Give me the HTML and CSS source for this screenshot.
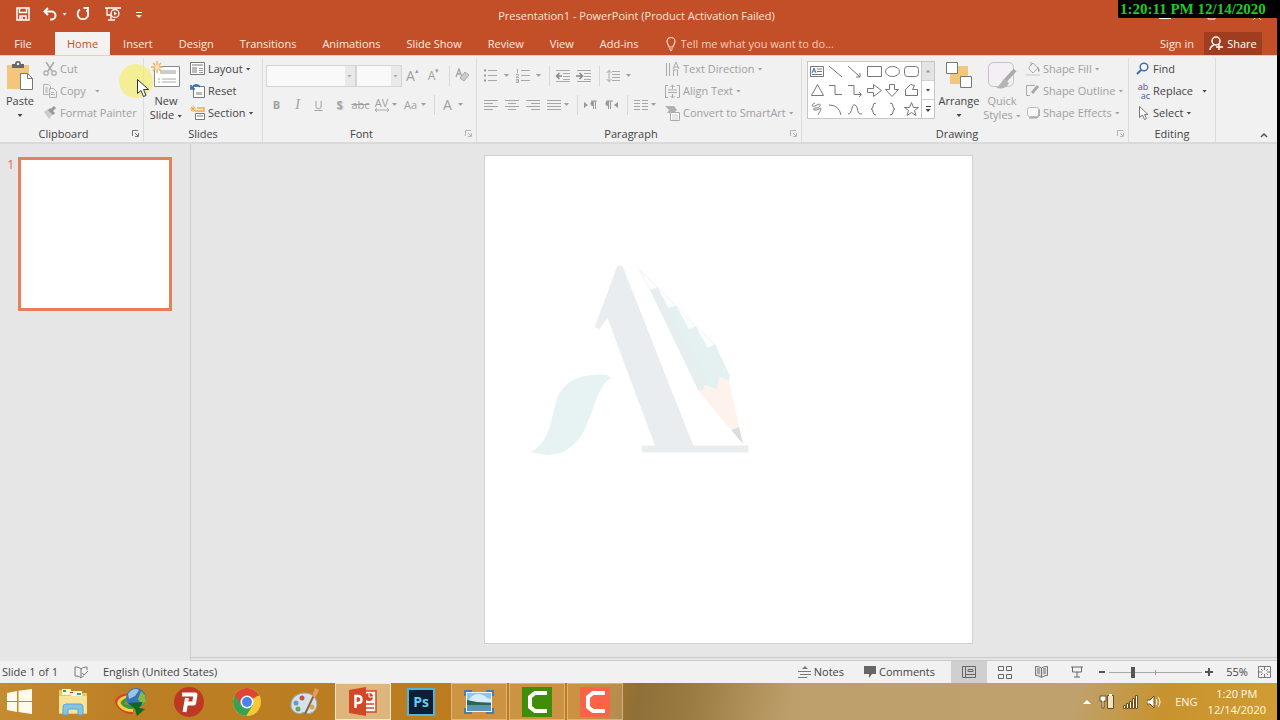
FILE: index.html
```html
<!DOCTYPE html>
<html lang="en">
<head>
    <meta charset="UTF-8">
    <meta name="viewport" content="width=device-width, initial-scale=1.0">
    <link rel="stylesheet" href="styles.css">
    <title>Presentation1 - PowerPoint</title>
</head>
<body>
    <div class="window">
        <header class="titleBar">
            <div class="quickAccess">
                <button aria-label="Save"><svg width="14" height="14" viewBox="0 0 14 14"><path d="M1 1h12v12H1zM3.500 1v4.500h7V1M4 13V9h6v4M6 10v3" fill="none" stroke="#fff" stroke-width="1.500"/></svg></button>
                <button class="undo" aria-label="Undo"><svg width="14" height="14" viewBox="0 0 14 14"><path d="M5 1L1.500 4.500L5 8M2 4.500h6.500a4 4 0 0 1 0 8H7" fill="none" stroke="#fff" stroke-width="2"/></svg><i class="caret"></i></button>
                <button aria-label="Redo"><svg width="14" height="14" viewBox="0 0 14 14"><path d="M4 2.500A5.300 5.300 0 1 0 10.500 3M7.500 1H12v5" fill="none" stroke="#fff" stroke-width="1.800"/></svg></button>
                <button aria-label="Start slide show"><svg width="16" height="14" viewBox="0 0 16 14"><path d="M0 1h16M2 1v7h4M6 9v3M3 13h7" fill="none" stroke="#fff" stroke-width="1.300"/><circle cx="10" cy="6.500" r="4" fill="#c24f28" stroke="#fff" stroke-width="1.300"/><path d="M9 4.500l3 2-3 2z" fill="#fff"/></svg></button>
                <button aria-label="Customize toolbar"><svg width="6" height="8" viewBox="0 0 6 8"><path d="M0 2.500h6" stroke="#fff"/><path d="M0 5h6L3 8z" fill="#fff"/></svg></button>
            </div>
            <h1 class="title">Presentation1 - PowerPoint (Product Activation Failed)</h1>
            <div class="windowButtons">
                <button aria-label="Minimize"><svg width="12" height="10"><path d="M0 7.500h12" stroke="#fff"/></svg></button>
                <button aria-label="Restore"><svg width="10" height="8"><path d="M1 1h7v6H1z" fill="none" stroke="#fff"/></svg></button>
                <button aria-label="Close"><svg width="8" height="8"><path d="M0 0l8 8M8 0L0 8" stroke="#fff"/></svg></button>
            </div>
        </header>

        <nav class="tabs">
            <button class="tab file">File</button>
            <button class="tab active">Home</button>
            <button class="tab">Insert</button>
            <button class="tab">Design</button>
            <button class="tab">Transitions</button>
            <button class="tab">Animations</button>
            <button class="tab">Slide Show</button>
            <button class="tab">Review</button>
            <button class="tab">View</button>
            <button class="tab">Add-ins</button>
            <label class="tellMe">
                <svg width="10" height="14" viewBox="0 0 10 14"><path d="M3 10C3 8 1 7 1 4.500a4 4 0 0 1 8 0C9 7 7 8 7 10zM3 12h4M4 13.500h2" fill="none" stroke="#fbd9cb" stroke-width="1.200"/></svg>
                <input type="text" placeholder="Tell me what you want to do..." aria-label="Tell me what you want to do">
            </label>
            <button class="signIn">Sign in</button>
            <button class="share"><svg width="15" height="15" viewBox="0 0 15 15"><path d="M1 14c0-3 1.500-4 4-5M10 14v-6M7 11h7" fill="none" stroke="#fff" stroke-width="1.500"/><circle cx="7" cy="5" r="4" fill="none" stroke="#fff" stroke-width="1.500"/></svg>Share</button>
        </nav>

        <div class="ribbon">
            <section class="group clipboard">
                <div class="groupBody">
                    <button class="big"><svg width="28" height="30" viewBox="0 0 28 30"><path d="M1 4h22v24H1z" fill="#f3c67b"/><path d="M6 3h3a3 3 0 0 1 6 0h3v4H6z" fill="#666"/><circle cx="12" cy="3" r="1.300" fill="#f0f0f0"/><path d="M14.500 12.500h7l5 5v11h-12z" fill="#fff" stroke="#777"/><path d="M21.500 12.500v5h5" fill="none" stroke="#777"/></svg><span>Paste</span><i class="caret"></i></button>
                    <div class="stack">
                        <button class="cmd off"><svg width="14" height="14" viewBox="0 0 14 14"><path d="M3 0l6 9M11 0L5 9" stroke="#aaa" stroke-width="1.600"/><circle cx="3" cy="11" r="2.200" fill="none" stroke="#aaa" stroke-width="1.300"/><circle cx="11" cy="11" r="2.200" fill="none" stroke="#aaa" stroke-width="1.300"/></svg>Cut</button>
                        <button class="cmd off"><svg width="14" height="14" viewBox="0 0 14 14"><path d="M.5.500h5l2 2v8h-7zM2 4h3M2 6h3M2 8h3" fill="#f0f0f0" stroke="#b0b0b0"/><path d="M6.500 4.500h4l3 3v6h-7zM8 8.500h3M8 10.500h4" fill="#f0f0f0" stroke="#b0b0b0"/></svg>Copy<i class="caret far"></i></button>
                        <button class="cmd off"><svg width="14" height="14" viewBox="0 0 14 14"><path d="M1 6l4-3 5 5-4 5z" fill="#ccc"/><path d="M6 3l5 5M8 5l4-4" stroke="#999" stroke-width="3"/></svg>Format Painter</button>
                    </div>
                </div>
                <footer class="groupName"><span>Clipboard</span><button class="launcher" aria-label="Clipboard options"><svg width="7" height="7"><path d="M.5 6V.500H6M3 3l3 3M6.500 3v3.500H3" fill="none" stroke="#777"/></svg></button></footer>
            </section>

            <section class="group slides">
                <div class="groupBody">
                    <button class="big"><svg width="30" height="30" viewBox="0 0 30 30"><path d="M3.500 5.500h25v20h-25z" fill="#fff" stroke="#888"/><path d="M9 9h16v4H9z" fill="#ccc"/><path d="M7 18h2M11 18h14M7 21h2M11 21h14" stroke="#aaa"/><path d="M6 0v12M0 6h12M2 2l8 8M10 2l-8 8" stroke="#efb25c" stroke-width="1.500"/><circle cx="6" cy="6" r="2.500" fill="#f9dfb7"/></svg><span>New</span><span>Slide<i class="caret"></i></span></button>
                    <div class="stack">
                        <button class="cmd"><svg width="15" height="14" viewBox="0 0 15 14"><path d="M.5.500h14v12H.5z" fill="#fff" stroke="#777"/><path d="M2 2h11v2H2zM2 5h5v6H2z" fill="#bbb"/><path d="M9 6.500h4M9 8.500h4M9 10.500h4" stroke="#999"/></svg>Layout<i class="caret"></i></button>
                        <button class="cmd"><svg width="15" height="14" viewBox="0 0 15 14"><path d="M3.500 2.500h11v11h-11z" fill="#fff" stroke="#777"/><path d="M6 8h6v3H6z" fill="#bbb"/><path d="M1 1v4h4M2 4c2-4 6-4 8-1" fill="none" stroke="#2f6fb0" stroke-width="1.600"/></svg>Reset</button>
                        <button class="cmd"><svg width="15" height="14" viewBox="0 0 15 14"><path d="M3 0v6M0 3h6M1 1l4 4M5 1L1 5" stroke="#efa94c"/><path d="M7 2h7v3H5" fill="none" stroke="#efa94c" stroke-width="1.500"/><path d="M5.500 7.500h9v6h-9zM7 10h6" fill="#fff" stroke="#777"/></svg>Section<i class="caret"></i></button>
                    </div>
                </div>
                <footer class="groupName"><span>Slides</span></footer>
            </section>

            <section class="group font">
                <div class="groupBody rows">
                    <div class="toolRow">
                        <label class="combo wide"><select aria-label="Font" disabled><option></option></select></label>
                        <label class="combo"><select aria-label="Font size" disabled><option></option></select></label>
                        <button class="tool grow">A<sup>&#9652;</sup></button>
                        <button class="tool shrink">A<sup>&#9662;</sup></button>
                        <i class="sep"></i>
                        <button class="tool" aria-label="Clear formatting"><svg width="15" height="15" viewBox="0 0 15 15"><path d="M1 9L4 1l3 8M2 6h4" fill="none" stroke="#a5a5a5" stroke-width="1.300"/><path d="M5 10l5-6 4 3-5 6z" fill="#ccc" stroke="#aaa"/></svg></button>
                    </div>
                    <div class="toolRow">
                        <button class="tool"><b>B</b></button>
                        <button class="tool italic"><i>I</i></button>
                        <button class="tool"><u>U</u></button>
                        <button class="tool shadow">S</button>
                        <button class="tool strike">abc</button>
                        <button class="tool spacing">AV<svg width="14" height="4" viewBox="0 0 14 4"><path d="M0 2h14M2 0L0 2l2 2M12 0l2 2-2 2" fill="none" stroke="#aaa"/></svg></button><i class="caret off"></i>
                        <button class="tool case">Aa</button><i class="caret off"></i>
                        <i class="sep"></i>
                        <button class="tool color">A</button><i class="caret off"></i>
                    </div>
                </div>
                <footer class="groupName"><span>Font</span><button class="launcher off" aria-label="Font options"><svg width="7" height="7"><path d="M.5 6V.500H6M3 3l3 3M6.500 3v3.500H3" fill="none" stroke="#b5b5b5"/></svg></button></footer>
            </section>

            <section class="group paragraph">
                <div class="groupBody">
                    <div class="rows">
                        <div class="toolRow lists">
                            <button class="tool" aria-label="Bullets"><svg width="14" height="14" viewBox="0 0 14 14"><path d="M4 1.500h9M4 6.500h9M4 11.500h9" stroke="#aaa"/><path d="M0 1.500h2M0 6.500h2M0 11.500h2" stroke="#999" stroke-width="2"/></svg></button><i class="caret off"></i>
                            <button class="tool" aria-label="Numbering"><svg width="14" height="14" viewBox="0 0 14 14"><path d="M5 1.500h9M5 6.500h9M5 11.500h9M1.500 0v4M0 5.500h2.500v1L0 8.500h3M0 10.500h2.500v3H0M0 12h2" fill="none" stroke="#aaa"/></svg></button><i class="caret off"></i>
                            <i class="sep"></i>
                            <button class="tool" aria-label="Decrease indent"><svg width="16" height="14" viewBox="0 0 16 14"><path d="M1 1.500h14M8 4.500h7M8 7.500h7M8 10.500h7M1 12.500h14" stroke="#aaa"/><path d="M7 7H2M4.500 4L1.500 7l3 3" fill="none" stroke="#888" stroke-width="1.500"/></svg></button>
                            <button class="tool" aria-label="Increase indent"><svg width="16" height="14" viewBox="0 0 16 14"><path d="M1 1.500h14M8 4.500h7M8 7.500h7M8 10.500h7M1 12.500h14" stroke="#aaa"/><path d="M0 7h6M3.500 4l3 3-3 3" fill="none" stroke="#888" stroke-width="1.500"/></svg></button>
                            <i class="sep"></i>
                            <button class="tool" aria-label="Line spacing"><svg width="14" height="14" viewBox="0 0 14 14"><path d="M6 2.500h8M6 5.500h8M6 8.500h8M6 11.500h8M3 1v12M.5 4L3 1.500 5.500 4M.5 10L3 12.500 5.500 10" fill="none" stroke="#aaa"/></svg></button><i class="caret off"></i>
                        </div>
                        <div class="toolRow">
                            <button class="tool" aria-label="Align left"><svg width="14" height="10"><path d="M0 .5h14M0 3.500h9M0 6.500h14M0 9.500h9" stroke="#a5a5a5"/></svg></button>
                            <button class="tool" aria-label="Center"><svg width="14" height="10"><path d="M0 .5h14M3 3.500h8M0 6.500h14M3 9.500h8" stroke="#a5a5a5"/></svg></button>
                            <button class="tool" aria-label="Align right"><svg width="14" height="10"><path d="M0 .5h14M5 3.500h9M0 6.500h14M5 9.500h9" stroke="#a5a5a5"/></svg></button>
                            <button class="tool" aria-label="Justify"><svg width="14" height="10"><path d="M0 .5h14M0 3.500h14M0 6.500h14M0 9.500h14" stroke="#a5a5a5"/></svg></button><i class="caret off"></i>
                            <i class="sep"></i>
                            <button class="tool" aria-label="Left to right"><svg width="13" height="10" viewBox="0 0 13 10"><path d="M0 2l4 3-4 3zM9 1a2.500 2.500 0 0 0 0 5z" fill="#999"/><path d="M7 1h6M9.500 1v8M11.500 1v8" stroke="#999"/></svg></button>
                            <button class="tool" aria-label="Right to left"><svg width="13" height="10" viewBox="0 0 13 10"><path d="M13 2L9 5l4 3zM3 1a2.500 2.500 0 0 0 0 5z" fill="#999"/><path d="M1 1h7M3.500 1v8M5.500 1v8" stroke="#999"/></svg></button>
                            <i class="sep"></i>
                            <button class="tool" aria-label="Columns"><svg width="14" height="10"><path d="M0 .5h6M8 .5h6M0 3.500h6M8 3.500h6M0 6.500h6M8 6.500h6M0 9.500h6M8 9.500h6" stroke="#a5a5a5"/></svg></button><i class="caret off"></i>
                        </div>
                    </div>
                    <div class="stack">
                        <button class="cmd off"><svg width="15" height="15" viewBox="0 0 15 15"><path d="M1.500 1v13M4.500 1v13M8.500 8v6M12.500 8v6M8 7l3-7 3 7M9 5h4M8 8h5" fill="none" stroke="#aaa"/></svg>Text Direction<i class="caret"></i></button>
                        <button class="cmd off"><svg width="15" height="15" viewBox="0 0 15 15"><path d="M3 1.500H.5v12H3M12 1.500h2.500v12H12M3 6h9M3 8.500h9M7.500 1v4M7.500 10v4M5.500 3l2-2 2 2M5.500 12l2 2 2-2" fill="none" stroke="#aaa"/></svg>Align Text<i class="caret"></i></button>
                        <button class="cmd off"><svg width="15" height="15" viewBox="0 0 15 15"><path d="M0 0h9l3 4-3 3H2l2-3z" fill="#b0b0b0"/><path d="M5.500 6.500h9v8h-9z" fill="#fff" stroke="#aaa"/><path d="M7 9h6M7 11h6M7 13h6" stroke="#ccc"/></svg>Convert to SmartArt<i class="caret"></i></button>
                    </div>
                </div>
                <footer class="groupName"><span>Paragraph</span><button class="launcher off" aria-label="Paragraph options"><svg width="7" height="7"><path d="M.5 6V.500H6M3 3l3 3M6.500 3v3.500H3" fill="none" stroke="#b5b5b5"/></svg></button></footer>
            </section>

            <section class="group drawing">
                <div class="groupBody">
                    <div class="gallery">
                        <svg class="shapes" width="113" height="56" viewBox="0 0 113 56" fill="none" stroke="#777">
                            <path d="M2.500 4.500h13v10h-13z"/><path d="M4 11l2-5 2 5M5 9h2" stroke="#4472b0"/><path d="M9 7h5M9 9.500h5M4 12.500h10"/>
                            <path d="M21 4l13 11M40 4l12 11M52 11v4h-4M59.500 4.500h14v10h-14z"/>
                            <ellipse cx="84.500" cy="9.500" rx="7" ry="5"/><rect x="96.500" y="4.500" width="14" height="10" rx="3"/>
                            <path d="M9.500 22.500l6 11h-12zM21 23.500h6v9h7M40 23.500h6v9h7M51 30l2.500 2.500L51 35M59.500 26.500h6v-4l8 6-8 6v-4h-6zM81.500 22.500h5v5h4l-6.500 7-6.500-7h4zM97.500 33.500v-6l5-5 4 1-2 4h5v6z"/>
                            <path d="M7 41c-5 2-3 5 2 2s4 3-1 3-2 4 3 1-1 5-1 6M21 43q10 0 12 10M40 52c5 0 3-11 7-9s1 10 7 9M68 41q-3 0-3 3t-2 3q2 0 2 3t3 3M82 41q3 0 3 3t2 3q-2 0-2 3t-3 3M103.500 40.500l2 5h5l-4 3 1.500 5-4.500-3-4.500 3 1.500-5-4-3h5z"/>
                        </svg>
                        <div class="galleryScroll">
                            <button class="up" aria-label="Previous shapes"><i class="caret off"></i></button>
                            <button aria-label="Next shapes"><i class="caret"></i></button>
                            <button class="more" aria-label="More shapes"><i class="caret"></i></button>
                        </div>
                    </div>
                    <button class="big arrange"><svg width="28" height="30" viewBox="0 0 28 30"><path d="M5 5h18v18H5z" fill="#f3c67b"/><path d="M1.500 1.500h11v11h-11zM15.500 15.500h11v11h-11z" fill="#fff" stroke="#777"/></svg><span>Arrange</span><i class="caret"></i></button>
                    <button class="big off"><svg width="30" height="30" viewBox="0 0 30 30"><rect x="1.500" y="1.500" width="25" height="24" rx="5" fill="#f4eff5" stroke="#c5c0c5"/><path d="M28 9L17 21" stroke="#aaa" stroke-width="4"/><path d="M18 18l4 4c-3 6-8 6-13 5 4-2 5-7 9-9z" fill="#b5b5b5"/></svg><span>Quick</span><span>Styles<i class="caret"></i></span></button>
                    <div class="stack">
                        <button class="cmd off"><svg width="14" height="14" viewBox="0 0 14 14"><path d="M3 5l4-4 5 5-5 5-4-4zM5 4V0" fill="#f0f0f0" stroke="#aaa"/><path d="M12 5q3 4 0 5z" fill="#999"/><path d="M0 13h14" stroke="#ddd" stroke-width="2"/></svg>Shape Fill<i class="caret"></i></button>
                        <button class="cmd off"><svg width="14" height="14" viewBox="0 0 14 14"><path d="M9 1.500H.5v10H4" fill="none" stroke="#aaa"/><path d="M6 9l6-7" stroke="#aaa" stroke-width="3"/></svg>Shape Outline<i class="caret"></i></button>
                        <button class="cmd off"><svg width="14" height="14" viewBox="0 0 14 14"><path d="M3 12h8l3-3V3l-3 8z" fill="#aaa" stroke="#aaa"/><rect x="1.500" y="1.500" width="11" height="9" rx="2" fill="#f7f7f7" stroke="#bbb"/></svg>Shape Effects<i class="caret"></i></button>
                    </div>
                </div>
                <footer class="groupName"><span>Drawing</span><button class="launcher off" aria-label="Drawing options"><svg width="7" height="7"><path d="M.5 6V.500H6M3 3l3 3M6.500 3v3.500H3" fill="none" stroke="#b5b5b5"/></svg></button></footer>
            </section>

            <section class="group editing">
                <div class="groupBody">
                    <div class="stack">
                        <button class="cmd"><svg width="14" height="14" viewBox="0 0 14 14"><circle cx="8" cy="5" r="3.800" fill="#fff" stroke="#3e6db5" stroke-width="1.500"/><path d="M5 8l-4 4" stroke="#3e6db5" stroke-width="2"/></svg>Find</button>
                        <button class="cmd"><span class="abac" aria-hidden="true"><span>ab</span><span>ac</span></span>Replace<i class="caret far"></i></button>
                        <button class="cmd"><svg width="14" height="14" viewBox="0 0 14 14"><path d="M3.500.5v11l3-2.500 2 4.500 2-1-2-4h3.500z" fill="#fff" stroke="#777"/></svg>Select<i class="caret"></i></button>
                    </div>
                </div>
                <footer class="groupName"><span>Editing</span></footer>
            </section>
            <button class="collapse" aria-label="Collapse the ribbon"><svg width="8" height="6"><path d="M1 5l3-3 3 3" fill="none" stroke="#555" stroke-width="1.500"/></svg></button>
        </div>

        <main class="workspace">
            <aside class="thumbnails">
                <span class="slideNumber">1</span>
                <button class="thumbnail" aria-label="Slide 1"></button>
            </aside>
            <div class="canvas">
                <div class="slide">
                    <svg class="watermark" viewBox="-106 -300 1464 1464">
                        <path d="M292 30h15l213 540h166v21H366v-21h39L262 187l-25 34-13-7z" fill="#e9edf0"/>
                        <path d="M33 590C110 545 88 440 130 396Q170 354 250 357Q268 358 270 368C225 402 223 470 187 535Q130 622 33 590z" fill="#e6f3f2"/>
                        <path d="M390 103L413 95L444 158L468 151L506 221L527 213L563 277L586 267L628 358V376L599 364L590 402L556 387L550 404H535z" fill="#e6eef0"/>
                        <path d="M444 158L468 151L597 392L590 402L575 395zM563 277L586 267L628 358V376L612 370z" fill="#e3f1f0"/>
                        <path d="M506 221L527 213L603 364L599 366L594 385z" fill="#e5f0f1"/>
                        <path d="M358 42L413 95L390 103zM413 95L468 151L444 158zM468 151L527 213L506 221zM527 213L586 267L563 277z" fill="#fdfefe" stroke="#eceeee" stroke-width="2"/>
                        <path d="M535 404H550L556 387L590 402L599 364L628 376L658 515L634 524z" fill="#fdf3ec"/>
                        <path d="M634 524L658 515L669 565z" fill="#dbdcde"/>
                    </svg>
                </div>
            </div>
        </main>

        <div class="statusBar">
            <span class="slideCount">Slide 1 of 1</span>
            <button class="spelling" aria-label="Spelling"><svg width="14" height="13" viewBox="0 0 14 13"><path d="M7 3C5 1 3 1 1 1v9c2 0 4 0 6 2 1-1 2-2 3-2M7 3v9M7 3c1-1 3-2 6-2v3M8 7l2 2 4-4" fill="none" stroke="#777"/></svg></button>
            <button class="language">English (United States)</button>
            <button class="notes"><svg width="13" height="12" viewBox="0 0 13 12"><path d="M0 5.500h13M2 8.500h11M0 11.500h9" stroke="#777"/><path d="M4 3l3-3 3 3z" fill="#777"/></svg>Notes</button>
            <button class="comments"><svg width="12" height="12" viewBox="0 0 12 12"><path d="M0 0h12v8H8l-3 4V8H0z" fill="#666"/></svg>Comments</button>
            <div class="views">
                <button class="current" aria-label="Normal"><svg width="14" height="12" viewBox="0 0 14 12"><path d="M.5.5h13v11H.5zM3.500.5v11M3.500 8.500h10M6 3.500h5v2H6z" fill="none" stroke="#666"/></svg></button>
                <button aria-label="Slide sorter"><svg width="14" height="13" viewBox="0 0 14 13"><path d="M.5.500h5v4h-5zM8.500.500h5v4h-5zM.5 8.500h5v4h-5zM8.500 8.500h5v4h-5z" fill="none" stroke="#666"/></svg></button>
                <button aria-label="Reading view"><svg width="13" height="12" viewBox="0 0 13 12"><path d="M6.500 2Q4 0 .5.500v9q3.500 0 6 2 2.500-2 6-2v-9Q9 0 6.500 2zM6.500 2v9M2 3h3M2 5h3M2 7h3M8 3h3M8 5h3M8 7h3" fill="#ddd" stroke="#777"/></svg></button>
                <button aria-label="Slide show"><svg width="12" height="12" viewBox="0 0 12 12"><path d="M0 1h12M1.500 1v5h9V1M6 6v5M3 11h6" fill="none" stroke="#666"/></svg></button>
            </div>
            <button class="zoomStep" aria-label="Zoom out"><svg width="6" height="6"><path d="M0 3h6" stroke="#555" stroke-width="2"/></svg></button>
            <input class="zoomSlider" type="range" min="0" max="100" value="25" aria-label="Zoom">
            <button class="zoomStep" aria-label="Zoom in"><svg width="8" height="8"><path d="M0 4h8M4 0v8" stroke="#555" stroke-width="2"/></svg></button>
            <button class="zoomValue">55%</button>
            <button class="fit" aria-label="Fit slide to window"><svg width="13" height="12" viewBox="0 0 13 12"><path d="M.5 3.500v-3h12v11H.5zM6.500 0v4M6.500 8v4M0 6h4M9 6h4M3 3l1.500 1.500M10 3L8.500 4.500M3 9l1.500-1.500M10 9L8.500 7.500" fill="none" stroke="#777"/></svg></button>
        </div>

        <div class="taskbar">
            <button class="start" aria-label="Start"><svg width="26" height="25" viewBox="0 0 26 25"><path d="M0 4l10-2v10H0zM11.500 1.800L25 0v12H11.500zM0 13h10v10L0 21zM11.500 13H25v12l-13.500-2z" fill="#fffbea"/></svg></button>
            <button class="app" aria-label="File Explorer"><svg width="30" height="28" viewBox="0 0 30 28"><path d="M1 2h8l2 3h18v21H1z" fill="#e8c865"/><path d="M4 1h9v6H4zM13 3h11v6H13z" fill="#fff8db"/><path d="M5 2h3v2H5z" fill="#3a9a50"/><path d="M12 4h3v1h-3z" fill="#c33"/><path d="M19 5h4v2h-4z" fill="#39c"/><path d="M1 8h28v17H1z" fill="#f6e49b"/><path d="M5 27v-8q0-3 3-3h14q3 0 3 3v8h-5v-6H10v6z" fill="#82c5e5" stroke="#5aa6cd"/></svg></button>
            <button class="app" aria-label="Download Manager"><svg width="32" height="30" viewBox="0 0 32 30"><path d="M15 7C0 9-1 15 4 20s10 6 14 6" fill="none" stroke="#d9432d" stroke-width="2.500"/><path d="M15 9.500C3 11 2 16 6 19.500s8 4 12 4" fill="none" stroke="#f5d43f" stroke-width="3"/><path d="M14 12c-9 1-8 8 4 8.500" fill="none" stroke="#329b41" stroke-width="3"/><circle cx="21" cy="11" r="10" fill="#3574bd"/><path d="M13 7q5-7 11-4l-4 6-6 3z" fill="#9dc4e4"/><path d="M26 4l4 4 1 6-4 4-4-6z" fill="#86b944"/><path d="M13 16l15-1-4 6 6 1-8 7-2-7z" fill="#0d6a1c"/></svg></button>
            <button class="app" aria-label="Psiphon"><svg width="30" height="30" viewBox="0 0 30 30"><circle cx="15" cy="15" r="15" fill="#bd3924"/><path d="M8 7.500h13.500l-1.500 9h-7M13 11l-2.500 14" fill="none" stroke="#fff" stroke-width="4" stroke-linejoin="round"/></svg></button>
            <button class="app" aria-label="Chrome"><svg width="28" height="28" viewBox="0 0 28 28"><circle cx="14" cy="14" r="14" fill="#f6c835"/><path d="M14 14L1.900 7A14 14 0 0 1 26.100 7z" fill="#dc4636"/><path d="M1.900 7A14 14 0 0 0 13 28l7-11z" fill="#35a353"/><path d="M1.900 7L8 17l6-9h12.100A14 14 0 0 0 1.900 7z" fill="#dc4636"/><circle cx="14" cy="14" r="6.500" fill="#fff"/><circle cx="14" cy="14" r="5" fill="#4a83e8"/></svg></button>
            <button class="app" aria-label="Paint"><svg width="30" height="28" viewBox="0 0 30 28"><path d="M1 16C2 7 12 3 20 6s9 14 3 18-8-1-11 1S0 24 1 16z" fill="#d5e2e9" stroke="#94a9b5"/><circle cx="6" cy="15" r="2.500" fill="#609fc5"/><circle cx="12" cy="10" r="2.500" fill="#bd554c"/><circle cx="8" cy="21" r="2.500" fill="#66a35b"/><circle cx="22" cy="19" r="2.500" fill="#d7a94a"/><path d="M15 26L24 7" stroke="#8c6445" stroke-width="2"/><path d="M22 8l3-8 4 2-4 8z" fill="#e9985f"/></svg></button>
            <button class="app open front" aria-label="PowerPoint"><svg width="28" height="29" viewBox="0 0 28 29"><path d="M14 4h13v21H14z" fill="#fff" stroke="#d24726" stroke-width="1.500"/><circle cx="20" cy="10" r="4" fill="#d24726"/><path d="M20 6v4h4" stroke="#fff" fill="none"/><path d="M17 17h8M17 21h8" stroke="#d24726" stroke-width="1.500"/><path d="M0 3l17-3v29L0 26z" fill="#d24726"/><path d="M6.500 21V9H9q3.500 0 3.500 3.500T9 16H7" fill="none" stroke="#fff" stroke-width="2.500"/></svg></button>
            <button class="app"><span class="photoshop">Ps</span></button>
            <button class="app open" aria-label="Photo viewer"><svg width="30" height="24" viewBox="0 0 30 24"><path d="M0 0h8v6H0zM22 0h8v6h-8zM0 18h8v6H0zM22 18h8v6h-8z" fill="#4a7eaa"/><path d="M2 2h26v20H2z" fill="#e8f5fa"/><path d="M3 3h24v10H3z" fill="#8cc5ed"/><path d="M8 6q8-5 15 2l4 1v3H3z" fill="#d7edfa"/><path d="M3 10l10 2 14 1v3H3z" fill="#2f6651"/><path d="M3 15h24v6H3z" fill="#5895b8"/></svg></button>
            <button class="app open" aria-label="Camtasia"><svg width="30" height="30" viewBox="0 0 30 30"><path d="M0 0h30v30H0z" fill="#3f8d08"/><path d="M25 6H13L8 10v10l5 4h12" fill="none" stroke="#fff" stroke-width="4"/></svg></button>
            <button class="app open" aria-label="Camtasia Recorder"><svg width="30" height="30" viewBox="0 0 30 30"><path d="M0 0h30v30H0z" fill="#fb6349"/><path d="M25 6H13L8 10v10l5 4h12" fill="none" stroke="#fff" stroke-width="4"/></svg></button>
            <div class="tray">
                <button aria-label="Show hidden icons"><svg width="8" height="5"><path d="M0 5l4-4 4 4z" fill="#fff"/></svg></button>
                <button aria-label="Power"><svg width="16" height="16" viewBox="0 0 16 16"><path d="M8.500 1.500h6v13h-6z" fill="#eee4c8" stroke="#70501a"/><path d="M1 2h6v5H5v7H3V7H1z" fill="#fff" stroke="#70501a"/><path d="M10 0h3v2h-3z" fill="#fff"/></svg></button>
                <button aria-label="Network"><svg width="16" height="14" viewBox="0 0 16 14"><path d="M.5 10.500h2v3h-2zM3.500 8.500h2v5h-2zM6.500 6.500h2v7h-2zM9.500 3.500h2v10h-2zM12.500.500h2v13h-2z" fill="#fff" stroke="#70501a"/></svg></button>
                <button aria-label="Volume"><svg width="14" height="14" viewBox="0 0 14 14"><path d="M0 5h3l4-4v12L3 9H0z" fill="#fff" stroke="#70501a"/><path d="M9 4q2 3 0 6M11 2q4 5 0 10" fill="none" stroke="#fff"/></svg></button>
                <button class="inputLanguage">ENG</button>
                <button class="clock"><span>1:20 PM</span><span>12/14/2020</span></button>
            </div>
        </div>
    </div>

    <div class="recordedTime">1:20:11 PM 12/14/2020</div>
    <div class="pointer"><svg width="12" height="19" viewBox="0 0 12 19"><path d="M.5.5v14l3.500-3 2.500 6 2.500-1-2.500-6h5z" fill="#fff" stroke="#333"/></svg></div>
</body>
</html>
```
FILE: styles.css
```css
* {
    box-sizing: border-box;
}

body {
    margin: 0;
    padding-right: 3px;
    background-color: #000;
    color: #444;
    font-family: "Open Sans", "Noto Sans", sans-serif;
    font-size: 11px;
    line-height: 14px;
}

button,
input,
select {
    margin: 0;
    padding: 0;
    border: none;
    background: none;
    color: inherit;
    font: inherit;
    white-space: nowrap;
}

button {
    display: flex;
    align-items: center;
    justify-content: center;
}

svg {
    flex: none;
    display: block;
}

.window {
    display: flex;
    flex-direction: column;
    height: 100vh;
    background-color: #e6e6e6;
}

.caret {
    display: inline-block;
    flex: none;
    width: 5px;
    height: 3px;
    margin-left: 3px;
    background-color: currentColor;
    clip-path: polygon(0 0, 100% 0, 50% 100%);
    vertical-align: middle;
}

.off {
    color: #a0a0a0;
}

/* title bar and tabs */
.titleBar {
    display: grid;
    grid-template-columns: 1fr auto 1fr;
    align-items: center;
    height: 32px;
    background-color: #c24f28;
    color: #fff;
}

.quickAccess {
    display: flex;
    align-items: center;
    gap: 15px;
    height: 28px;
    padding-left: 16px;
    align-self: start;
}

.undo {
    margin-left: -2px;
}

.undo .caret {
    margin-left: 5px;
}

.undo + button {
    margin-left: -6px;
}

.title {
    margin: 0;
    padding-right: 4px;
    font-size: 11px;
    font-weight: normal;
    color: #fde3d8;
}

.windowButtons {
    display: flex;
    justify-content: flex-end;
    align-items: center;
    gap: 36px;
    padding-right: 16px;
}

.tabs {
    display: flex;
    height: 23px;
    background-color: #c24f28;
    color: #ffeae1;
}

.tab {
    padding: 0 13px;
}

.file {
    width: 55px;
    padding-right: 22px;
}

.active {
    padding: 0 12px;
    background-color: #f3f2f1;
    color: #c24f28;
}

.tellMe {
    display: flex;
    flex: 1;
    align-items: center;
    gap: 5px;
    padding-left: 14px;
}

.tellMe input {
    width: 180px;
}

.tellMe input::placeholder {
    color: #f8cdbc;
    opacity: 1;
}

.signIn {
    padding: 0 10px;
}

.share {
    gap: 3px;
    width: 58px;
    margin-right: 15px;
    background-color: #a03d20;
    color: #fff;
}

/* ribbon */
.ribbon {
    display: flex;
    height: 89px;
    padding-top: 2px;
    background-color: #f1f1f1;
    border-top: 1px solid #f6c9b6;
    border-bottom: 2px solid #dadada;
}

.group {
    display: flex;
    flex: none;
    flex-direction: column;
    border-right: 1px solid #dcdcdc;
}

.clipboard {
    width: 144px;
}

.slides {
    width: 119px;
}

.font {
    width: 214px;
}

.paragraph {
    width: 325px;
}

.drawing {
    width: 327px;
}

.editing {
    width: 87px;
}

.groupBody {
    display: flex;
    flex: none;
    height: 67px;
}

.groupName {
    display: flex;
    align-items: center;
    height: 17px;
}

.groupName span {
    flex: 1;
    text-align: center;
}

.launcher {
    margin-right: 4px;
    margin-left: 5px;
}

.big {
    flex-direction: column;
    justify-content: flex-start;
    width: 40px;
    padding-top: 3px;
}

.big svg {
    margin-bottom: 3px;
}

.big > .caret {
    margin: 6px 0 0;
}

.stack {
    display: flex;
    flex-direction: column;
    padding-left: 3px;
}

.cmd {
    justify-content: flex-start;
    gap: 3px;
    height: 22px;
}

.cmd .caret {
    margin-left: 0;
}

.cmd .far {
    margin-left: 6px;
}

.slides .big {
    width: 44px;
}

.slides .stack {
    padding-left: 2px;
}

.rows {
    display: flex;
    flex-direction: column;
    padding: 3px 0 0 3px;
}

.toolRow {
    display: flex;
    align-items: center;
    height: 29px;
    color: #a0a0a0;
}

.tool {
    width: 21px;
    height: 22px;
}

.toolRow .caret {
    margin: 0 3px 0 0;
}

.toolRow.lists .caret {
    margin: 0 3px;
}

.sep {
    width: 1px;
    height: 20px;
    margin: 0 2px 0 5px;
    background-color: #d8d8d8;
}

.combo {
    position: relative;
    width: 46px;
}

.combo.wide {
    width: 90px;
}

.combo select {
    display: block;
    width: 100%;
    height: 22px;
    border: 1px solid #c8c8c8;
    background: linear-gradient(to left, #e6e6e6 10px, #fdfdfd 10px);
    appearance: none;
}

.combo::after {
    content: "";
    position: absolute;
    top: 10px;
    right: 4px;
    width: 5px;
    height: 3px;
    background-color: #aaa;
    clip-path: polygon(0 0, 100% 0, 50% 100%);
}

.grow {
    font-size: 14px;
}

.shrink {
    font-size: 12px;
}

.tool sup {
    align-self: flex-start;
    font-size: 7px;
    line-height: 12px;
}

.italic {
    font-family: "Liberation Serif", serif;
    font-size: 14px;
}

.shadow {
    font-weight: bold;
    text-shadow: 1px 1px 1px #bbb;
}

.strike {
    text-decoration: line-through;
}

.spacing {
    flex-direction: column;
    line-height: 11px;
}

.color {
    font-size: 14px;
}

.paragraph .rows {
    width: 185px;
}

.gallery {
    display: flex;
    height: 58px;
    margin: 3px 1px 0 5px;
    border: 1px solid #c6c6c6;
    background-color: #fff;
}

.galleryScroll {
    display: flex;
    flex-direction: column;
    width: 13px;
    border-left: 1px solid #c6c6c6;
}

.galleryScroll button {
    flex: 1;
    border-bottom: 1px solid #d0d0d0;
}

.galleryScroll .caret {
    margin: 0;
}

.galleryScroll .up {
    background-color: #e4e4e4;
}

.up .caret {
    clip-path: polygon(50% 0, 100% 100%, 0 100%);
}

.galleryScroll .more {
    flex-direction: column;
    gap: 2px;
    border-bottom: none;
}

.more::before {
    content: "";
    width: 5px;
    height: 1px;
    background-color: currentColor;
}

.big.arrange {
    width: 46px;
}

.drawing .stack {
    padding-left: 4px;
}

.editing .stack {
    padding-left: 7px;
}

.abac {
    display: flex;
    flex-direction: column;
    width: 14px;
    color: #5b4a8a;
    font-size: 9px;
    line-height: 9px;
}

.abac span + span {
    text-align: right;
    color: #3b5d9b;
}

.collapse {
    align-self: flex-end;
    margin-left: auto;
    padding: 4px 9px;
}

/* slides */
.workspace {
    display: flex;
    flex: 1;
    min-height: 0;
}

.thumbnails {
    display: flex;
    align-items: flex-start;
    width: 191px;
    padding: 13px 0 0 7px;
    border-right: 1px solid #cfcfcf;
}

.slideNumber {
    width: 11px;
    color: #d8765a;
    font-size: 13px;
}

.thumbnail {
    width: 154px;
    aspect-ratio: 1;
    background-color: #fff;
    border: 3px solid #e57f5c;
}

.canvas {
    display: flex;
    flex: 1;
    justify-content: center;
    padding: 11px 12px 13px 0;
    border-bottom: 4px double #cacaca;
}

.slide {
    height: 100%;
    aspect-ratio: 1;
    background-color: #fff;
    border: 1px solid #d0d0d0;
}

/* status bar */
.statusBar {
    display: flex;
    align-items: center;
    height: 22px;
    padding-left: 2px;
    padding-right: 6px;
    background-color: #f1f1f1;
}

.spelling {
    margin: 0 15px 0 16px;
}

.notes,
.comments {
    gap: 3px;
}

.notes {
    margin-left: auto;
}

.comments {
    margin: 0 16px 0 20px;
}

.views {
    display: flex;
    align-self: stretch;
}

.views button {
    width: 36px;
}

.views .current {
    background-color: #cfcfcf;
}

.zoomStep {
    width: 14px;
}

.zoomSlider {
    width: 93px;
    height: 16px;
    background: linear-gradient(#999, #999) center / 1px 5px no-repeat, linear-gradient(#aaa, #aaa) center / 100% 1px no-repeat;
    appearance: none;
}

.zoomSlider::-webkit-slider-thumb {
    width: 4px;
    height: 11px;
    background-color: #555;
    appearance: none;
}

.zoomValue {
    width: 42px;
}

/* taskbar */
.taskbar {
    display: flex;
    gap: 2px;
    height: 37px;
    color: #fffbe8;
    background: linear-gradient(100deg, #c58c32 0%, #bd7f24 10%, #ba7b1e 45%, #8f7038 50%, #9a7b42 54%, #bda069 62%, #bfa16c 84%, #c8922e 91%, #d29c33 100%);
}

.start {
    width: 43px;
    padding-right: 4px;
}

.app {
    width: 56px;
}

.open {
    border: 1px solid rgba(255, 235, 200, 0.4);
    background-color: rgba(255, 220, 170, 0.25);
}

.front {
    border-color: rgba(255, 245, 225, 0.8);
    background-color: rgba(255, 240, 215, 0.5);
}

.photoshop {
    width: 28px;
    height: 28px;
    border: 2px solid #4fb5dc;
    background-color: #0e1e33;
    color: #65cdf4;
    font-size: 14px;
    font-weight: bold;
    line-height: 23px;
}

.tray {
    display: flex;
    align-items: center;
    gap: 8px;
    margin-left: auto;
    padding-right: 11px;
}

.tray .inputLanguage {
    margin: 0 2px 0 6px;
}

.clock {
    flex-direction: column;
    line-height: 16px;
}

/* on top of the window */
.recordedTime {
    position: absolute;
    top: 0;
    right: 0;
    width: 162px;
    height: 18px;
    padding-left: 2px;
    background-color: #000;
    color: #22c82c;
    font: bold 15px/18px "Liberation Serif", serif;
}

.pointer {
    position: absolute;
    top: 64px;
    left: 119px;
    width: 34px;
    height: 34px;
    padding: 15px 0 0 18px;
    border-radius: 50%;
    background-color: rgba(247, 238, 90, 0.6);
}
```
